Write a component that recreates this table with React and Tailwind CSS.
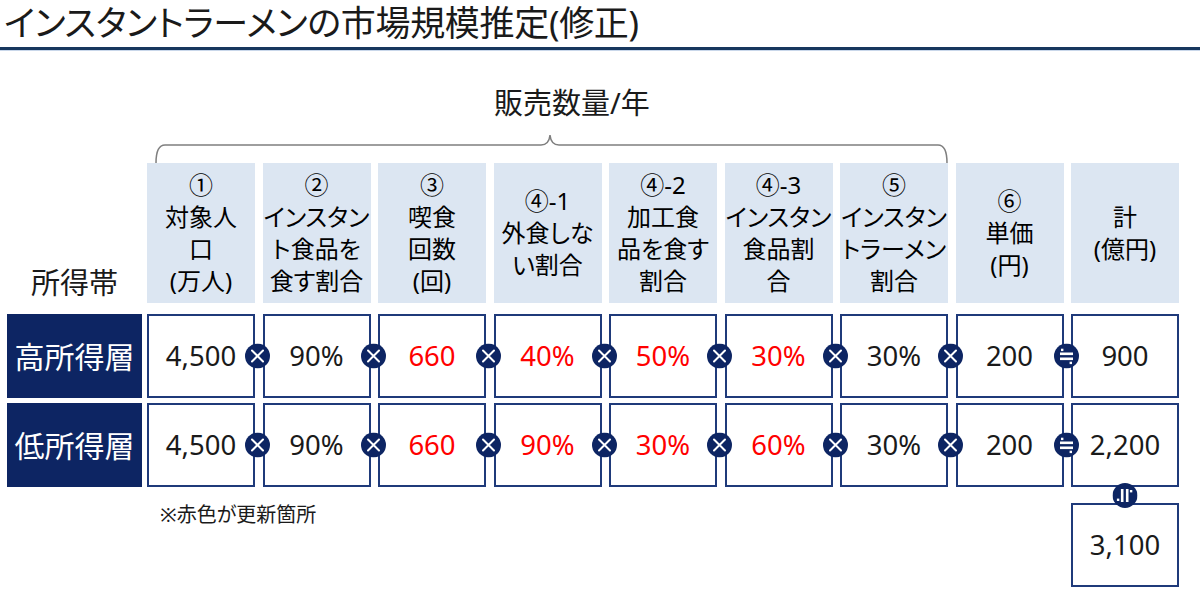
import React from 'react';

const headers = [
  ['①', '対象人', '口', '(万人)'],
  ['②', 'インスタン', 'ト食品を', '食す割合'],
  ['③', '喫食', '回数', '(回)'],
  ['④-1', '外食しな', 'い割合'],
  ['④-2', '加工食', '品を食す', '割合'],
  ['④-3', 'インスタン', '食品割', '合'],
  ['⑤', 'インスタン', 'トラーメン', '割合'],
  ['⑥', '単価', '(円)'],
  ['計', '(億円)'],
];

// [value, isRed]
const rows = [
  {
    label: '高所得層',
    values: [['4,500'], ['90%'], ['660', true], ['40%', true], ['50%', true], ['30%', true], ['30%'], ['200'], ['900']],
  },
  {
    label: '低所得層',
    values: [['4,500'], ['90%'], ['660', true], ['90%', true], ['30%', true], ['60%', true], ['30%'], ['200'], ['2,200']],
  },
];

function Times() {
  return (
    <svg viewBox="0 0 25 25" className="w-[25px] h-[25px]">
      <circle cx="12.5" cy="12.5" r="12.5" fill="#0d2563" />
      <path d="M7 7 L18 18 M18 7 L7 18" stroke="white" strokeWidth="2" strokeLinecap="round" />
    </svg>
  );
}

function Approx({ vertical }) {
  return (
    <svg viewBox="0 0 25 25" className={vertical ? 'w-[25px] h-[25px] rotate-90' : 'w-[25px] h-[25px]'}>
      <circle cx="12.5" cy="12.5" r="12.5" fill="#0d2563" />
      <rect x="6" y="9" width="13" height="2.6" fill="white" />
      <rect x="6" y="14" width="13" height="2.6" fill="white" />
      <rect x="7" y="5.2" width="2.4" height="2.4" fill="white" />
      <rect x="15.6" y="18.2" width="2.4" height="2.4" fill="white" />
    </svg>
  );
}

export default function App() {
  return (
    <div className="w-[1200px] h-[602px] bg-white text-[#1a1a1a] [font-family:'Noto_Sans','Noto_Sans_CJK_JP',sans-serif] [font-feature-settings:'palt'] overflow-hidden">
      {/* title */}
      <div className="h-[47px] pl-[4px] text-[35px] leading-[46px] tracking-[-0.3px] whitespace-nowrap">
        インスタントラーメンの市場規模推定(修正)
      </div>
      <div className="h-[3px] bg-[#17375e]" />
      <div className="h-[1px] bg-[#c9d7ea]" />

      {/* brace + caption */}
      <div className="flex pl-[147px]">
        <div className="w-[805px] pt-[32px]">
          <div className="h-[40px] pl-[347px] text-[29px] leading-[40px] whitespace-nowrap">販売数量/年</div>
          <svg viewBox="0 0 793 30" className="mt-[10px] ml-[8px] w-[793px] h-[30px]">
            <path
              d="M1 30 Q1 12 10 12 L386 12 Q394 12 395 2 Q396 12 404 12 L783 12 Q792 12 792 30"
              fill="none"
              stroke="#7f7f7f"
              strokeWidth="1.5"
            />
          </svg>
        </div>
      </div>

      {/* header row */}
      <div className="flex pl-[7px] gap-[5px]">
        <div className="w-[135px] h-[140px] flex items-end justify-center pb-[1px] text-[29px] leading-[38px]">
          所得帯
        </div>
        <div className="grid grid-cols-[repeat(9,108px)] gap-x-[7.5px]">
          {headers.map((lines, i) => (
            <div
              key={i}
              className="h-[140px] bg-[#dce6f2] flex flex-col items-center justify-center text-[24px] leading-[32px] text-black whitespace-nowrap"
            >
              {lines.map((l, j) => (
                <div key={j}>{l}</div>
              ))}
            </div>
          ))}
        </div>
      </div>

      {/* data rows */}
      {rows.map((row, r) => (
        <div key={r} className={r === 0 ? 'flex pl-[7px] gap-[5px] mt-[11px]' : 'flex pl-[7px] gap-[5px] mt-[5px]'}>
          <div className="w-[135px] h-[84px] bg-[#0d2563] text-white flex items-center justify-center text-[30px]">
            {row.label}
          </div>
          <div className="grid grid-cols-[repeat(9,108px)] gap-x-[7.5px]">
            {row.values.map(([v, red], i) => (
              <div
                key={i}
                className="relative h-[84px] border-2 border-[#1f3a7a] flex items-center justify-center text-[27.5px]"
              >
                <span className={red ? 'text-[#ff0000]' : 'text-[#1a1a1a]'}>{v}</span>
                {i < 7 && (
                  <div className="absolute z-10 right-[-17px] top-1/2 -translate-y-1/2 flex">
                    <Times />
                  </div>
                )}
                {i === 7 && (
                  <div className="absolute z-10 right-[-17px] top-1/2 -translate-y-1/2 flex">
                    <Approx />
                  </div>
                )}
              </div>
            ))}
          </div>
        </div>
      ))}

      {/* footer: note + total */}
      <div className="flex pl-[147px] mt-[16px]">
        <div className="flex-1 pl-[13px] text-[20px] leading-[24px]">※赤色が更新箇所</div>
        <div className="relative w-[108px] h-[84px] mr-[21px] border-2 border-[#1f3a7a] flex items-center justify-center text-[27.5px]">
          3,100
          <div className="absolute z-10 top-[-22px] left-1/2 -translate-x-1/2 flex">
            <Approx vertical />
          </div>
        </div>
      </div>
    </div>
  );
}
